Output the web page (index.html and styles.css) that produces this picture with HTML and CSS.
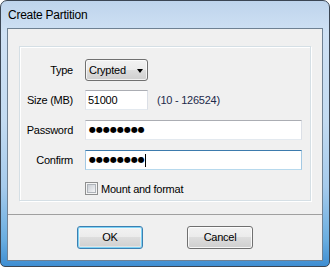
FILE: index.html
```html
<!DOCTYPE html>
<html>
<head>
<meta charset="utf-8">
<link rel="stylesheet" href="styles.css">
</head>
<body>
<div class="window">
  <div class="titlebar">Create Partition</div>
  <div class="client">
    <div class="group">
      <div class="form">
        <div class="label">Type</div>
        <div class="control"><div class="combo"><span>Crypted</span><span class="arrow"></span></div></div>
        <div class="label">Size (MB)</div>
        <div class="control"><div class="field small">51000</div><span class="range">(10 - 126524)</span></div>
        <div class="label">Password</div>
        <div class="control"><div class="field wide"><span class="dots">●●●●●●●●</span></div></div>
        <div class="label">Confirm</div>
        <div class="control"><div class="field wide focus"><span class="dots">●●●●●●●●</span><span class="caret"></span></div></div>
        <div class="label"></div>
        <div class="control"><span class="checkbox"><span class="check-inner"></span></span><span class="check-label">Mount and format</span></div>
      </div>
    </div>
    <div class="separator"></div>
    <div class="buttons">
      <div class="button default">OK</div>
      <div class="button">Cancel</div>
    </div>
  </div>
</div>
</body>
</html>
```
FILE: styles.css
```css
html, body {
  margin: 0;
  padding: 0;
  background: #ffffff;
}
body {
  font-family: "Liberation Sans", Arial, sans-serif;
  font-size: 11px;
  letter-spacing: -0.25px;
  color: #000;
}
.window {
  width: 330px;
  height: 267px;
  box-sizing: border-box;
  border: 1px solid #3b4654;
  border-radius: 7px 7px 5px 5px;
  background: linear-gradient(180deg, #bed4ec 0%, #cfe1f4 12%, #c3dbf1 45%, #a6cbec 70%, #6aaee0 90%, #3f8ed2 100%);
  padding: 0 6px 5px 6px;
  display: flex;
  flex-direction: column;
  overflow: hidden;
}
.titlebar {
  height: 27px;
  line-height: 29px;
  padding-left: 1px;
  font-size: 12px;
  color: #000;
  flex: none;
}
.client {
  flex: 1;
  border: 1px solid #6f8193;
  background: #f0f0f0;
  display: flex;
  flex-direction: column;
}
.group {
  margin: 17px 11px 0 11px;
  height: 155px;
  box-sizing: border-box;
  border: 1px solid #d5dfe5;
  box-shadow: inset 1px 1px 0 #ffffff, 1px 1px 0 #ffffff;
}
.form {
  display: grid;
  grid-template-columns: 53px 1fr;
  grid-auto-rows: 22px;
  row-gap: 8px;
  column-gap: 12px;
  align-items: center;
  padding: 12px 8px 0 0;
}
.label {
  text-align: right;
  line-height: 14px;
}
.control {
  display: flex;
  align-items: center;
  height: 22px;
}
.combo {
  width: 63px;
  height: 22px;
  box-sizing: border-box;
  border: 1px solid #707070;
  border-radius: 3px;
  background: linear-gradient(180deg, #f2f2f2 0%, #ebebeb 50%, #dddddd 50%, #cfcfcf 100%);
  box-shadow: inset 0 0 0 1px rgba(255,255,255,0.7);
  display: flex;
  align-items: center;
  justify-content: space-between;
  padding: 0 4px 0 3px;
}
.arrow {
  width: 0;
  height: 0;
  border-left: 3.5px solid transparent;
  border-right: 3.5px solid transparent;
  border-top: 4px solid #000;
  margin-top: 1px;
}
.field {
  height: 20px;
  box-sizing: border-box;
  background: #ffffff;
  border: 1px solid #dbdfe6;
  border-top-color: #abadb3;
  border-left-color: #e2e3ea;
  border-right-color: #dbdfe6;
  border-bottom-color: #e3e9ef;
  display: flex;
  align-items: center;
  padding-left: 2px;
}
.field.small {
  width: 63px;
}
.field.wide {
  flex: 1;
}
.field.focus {
  border-color: #b5cfe7;
  border-top-color: #3d7bad;
  border-left-color: #a4c9e3;
  border-right-color: #a4c9e3;
  border-bottom-color: #b7d9ed;
}
.dots {
  font-family: "DejaVu Sans", sans-serif;
  font-size: 8px;
  letter-spacing: 0;
  line-height: 12px;
  padding-left: 1px;
}
.caret {
  width: 1px;
  height: 13px;
  background: #000;
  margin-left: 0px;
}
.range {
  margin-left: 9px;
  color: #1d2a4a;
}
.checkbox {
  width: 13px;
  height: 13px;
  box-sizing: border-box;
  border: 1px solid #8e8f8f;
  background: #f4f4f4;
  padding: 1px;
  margin-top: -3px;
}
.check-inner {
  display: block;
  width: 100%;
  height: 100%;
  box-sizing: border-box;
  border: 1px solid #aeb3b9;
  background: linear-gradient(135deg, #cbcfd5 0%, #e2e4e8 60%, #f6f6f6 100%);
}
.check-label {
  margin-left: 3px;
  margin-top: -3px;
}
.separator {
  margin-top: 13px;
  height: 1px;
  background: #a0a0a0;
}
.buttons {
  display: flex;
  justify-content: center;
  gap: 44px;
  margin-top: 11px;
}
.button {
  width: 66px;
  height: 23px;
  box-sizing: border-box;
  border: 1px solid #707070;
  border-radius: 3px;
  background: linear-gradient(180deg, #f2f2f2 0%, #ebebeb 50%, #dddddd 50%, #cfcfcf 100%);
  box-shadow: inset 0 0 0 1px rgba(255,255,255,0.8);
  text-align: center;
  line-height: 21px;
}
.button.default {
  border-color: #3c7fb1;
  box-shadow: inset 0 0 0 1px #7fd3f5, inset 0 0 0 2px rgba(255,255,255,0.4);
}
```
